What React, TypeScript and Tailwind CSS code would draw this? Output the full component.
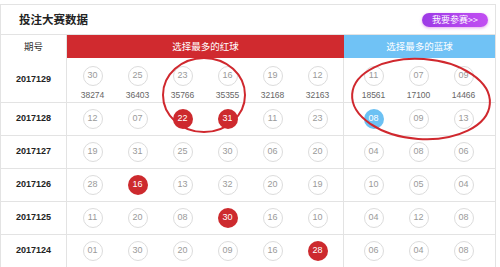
import React from 'react';

type Ball = { n: string; hit?: boolean };
type Row = { period: string; red: Ball[]; blue: Ball[]; counts?: { red: string[]; blue: string[] } };

const b = (s: string): Ball[] =>
  s.split(' ').map((t) => (t.startsWith('*') ? { n: t.slice(1), hit: true } : { n: t }));

const rows: Row[] = [
  {
    period: '2017129',
    red: b('30 25 23 16 19 12'),
    blue: b('11 07 09'),
    counts: {
      red: ['38274', '36403', '35766', '35355', '32168', '32163'],
      blue: ['18561', '17100', '14466'],
    },
  },
  { period: '2017128', red: b('12 07 *22 *31 11 23'), blue: b('*08 09 13') },
  { period: '2017127', red: b('19 31 25 30 06 20'), blue: b('04 08 06') },
  { period: '2017126', red: b('28 *16 13 32 20 19'), blue: b('10 05 04') },
  { period: '2017125', red: b('11 20 08 *30 16 10'), blue: b('04 12 08') },
  { period: '2017124', red: b('01 30 20 09 16 *28'), blue: b('06 04 08') },
];

function BallDot({ ball, color }: { ball: Ball; color: 'red' | 'blue' }) {
  if (ball.hit) {
    return (
      <span
        className={`flex h-[20px] w-[20px] items-center justify-center rounded-full text-[9px] text-white ${
          color === 'red' ? 'bg-[#cd2a2e]' : 'bg-[#6cc1f3]'
        }`}
      >
        {ball.n}
      </span>
    );
  }
  return (
    <span className="flex h-[20px] w-[20px] items-center justify-center rounded-full border border-[#dcdcdc] bg-white text-[9px] text-[#9a9a9a]">
      {ball.n}
    </span>
  );
}

function Cells({ balls, counts, color, tall }: { balls: Ball[]; counts?: string[]; color: 'red' | 'blue'; tall: boolean }) {
  return (
    <>
      {balls.map((ball, i) => (
        <div key={i} className={`flex w-[45px] flex-col items-center ${tall ? 'pt-[8px]' : 'justify-center'}`}>
          <BallDot ball={ball} color={color} />
          {counts && <span className="mt-[4px] text-[8.5px] leading-[11px] text-[#666]">{counts[i]}</span>}
        </div>
      ))}
    </>
  );
}

export default function App() {
  return (
    <div className="relative h-[267px] w-[500px] overflow-hidden bg-white font-['Liberation_Sans','Noto_Sans_CJK_SC',sans-serif]">
      <div className="mt-[4px] w-[496px] border-t border-r border-l border-[#e3e3e3]">
        <div className="flex h-[29px] items-center justify-between pl-[18px] pr-[7px]">
          <span className="text-[11.5px] font-bold text-[#222] font-['Noto_Sans_CJK_SC',sans-serif]">投注大赛数据</span>
          <span className="flex h-[14px] w-[66px] items-center justify-center rounded-full bg-gradient-to-r from-[#9d3ae6] to-[#c24ef2] text-[9px] text-white shadow-[0_1px_3px_rgba(210,80,220,0.5)] font-['Noto_Sans_CJK_SC',sans-serif]">
            我要参赛&gt;&gt;
          </span>
        </div>

        <div className="grid grid-cols-[66px_277px_1fr] border-t border-[#e3e3e3]">
          <div className="flex h-[23px] items-center justify-center border-r border-[#e3e3e3] text-[9.5px] text-[#333] font-['Noto_Sans_CJK_SC',sans-serif]">
            期号
          </div>
          <div className="flex h-[23px] items-center justify-center bg-[#d02a2f] text-[9.5px] text-white font-['Noto_Sans_CJK_SC',sans-serif]">
            选择最多的红球
          </div>
          <div className="flex h-[23px] items-center justify-center bg-[#70c2f5] text-[9.5px] text-white font-['Noto_Sans_CJK_SC',sans-serif]">
            选择最多的蓝球
          </div>

          {rows.map((row, ri) => {
            const tall = ri === 0;
            const h = tall ? 'h-[45px]' : 'h-[33px]';
            return (
              <React.Fragment key={row.period}>
                <div className={`${h} flex items-center justify-center border-r border-b border-[#e3e3e3] text-[9px] font-bold text-[#222]`}>
                  {row.period}
                </div>
                <div className={`${h} flex border-r border-b border-[#e3e3e3] pl-[3px]`}>
                  <Cells balls={row.red} counts={row.counts?.red} color="red" tall={tall} />
                </div>
                <div className={`${h} flex border-b border-[#e3e3e3] pl-[7px]`}>
                  <Cells balls={row.blue} counts={row.counts?.blue} color="blue" tall={tall} />
                </div>
              </React.Fragment>
            );
          })}
        </div>
      </div>

      <svg className="pointer-events-none absolute left-0 top-0" width="500" height="267">
        <ellipse cx="204" cy="95" rx="41" ry="37" fill="none" stroke="#d0282e" strokeWidth="2" />
        <ellipse cx="421" cy="99" rx="69" ry="40" fill="none" stroke="#d0282e" strokeWidth="2" transform="rotate(4 421 99)" />
      </svg>
    </div>
  );
}
